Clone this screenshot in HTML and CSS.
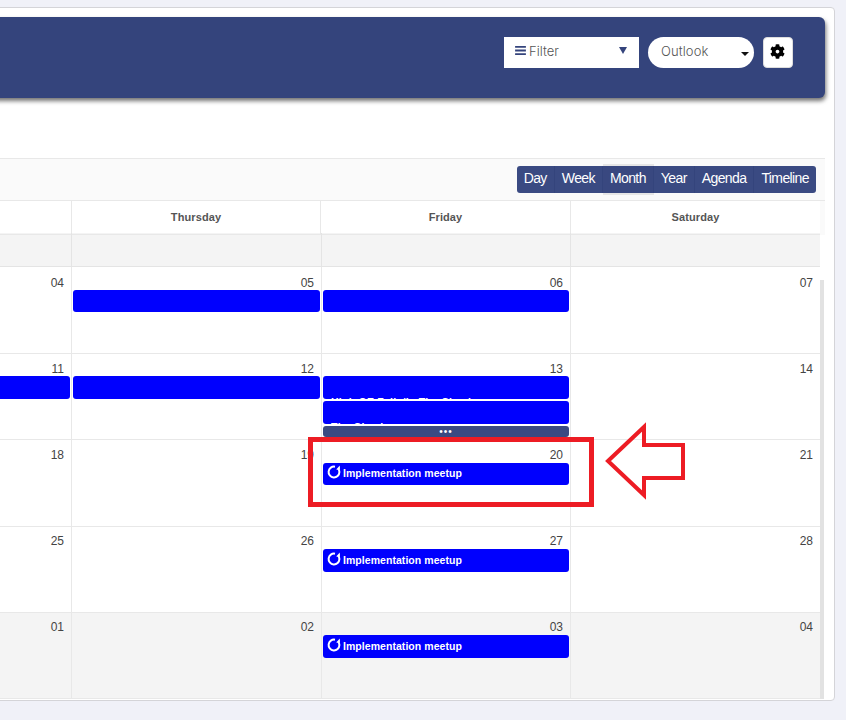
FILE: index.html
```html
<!DOCTYPE html>
<html lang="en">
<head>
<meta charset="utf-8">
<title>Calendar</title>
<link rel="stylesheet" href="styles.css">
</head>
<body>
<main class="card">
  <header class="banner">
    <div class="filter">
      <svg class="bars" viewBox="0 0 12 10"><path d="M0 0h12v2H0zM0 4h12v2H0zM0 8h12v2H0z"/></svg>
      <span class="filter-label">Filter</span>
      <span class="caret caret-blue"></span>
    </div>
    <div class="select"><span class="select-label">Outlook</span><span class="caret caret-black"></span></div>
    <button class="gear" aria-label="Settings">
      <svg viewBox="0 0 512 512"><path d="M487.4 315.7l-42.6-24.6c4.3-23.2 4.3-47 0-70.2l42.6-24.6c4.9-2.8 7.1-8.6 5.5-14-11.1-35.6-30-67.8-54.7-94.6-3.8-4.1-10-5.1-14.8-2.3L380.8 110c-17.9-15.4-38.5-27.3-60.8-35.1V25.8c0-5.6-3.9-10.5-9.4-11.7-36.7-8.2-74.3-7.8-109.2 0-5.5 1.2-9.4 6.1-9.4 11.7V75c-22.2 7.9-42.8 19.8-60.8 35.1L88.7 85.5c-4.9-2.8-11-1.9-14.8 2.3-24.7 26.7-43.6 58.9-54.7 94.6-1.7 5.4.6 11.2 5.5 14L67.3 221c-4.3 23.2-4.3 47 0 70.2l-42.6 24.6c-4.9 2.8-7.1 8.6-5.5 14 11.1 35.6 30 67.8 54.7 94.6 3.8 4.1 10 5.1 14.8 2.3l42.6-24.6c17.9 15.4 38.5 27.3 60.8 35.1v49.2c0 5.6 3.9 10.5 9.4 11.7 36.7 8.2 74.3 7.8 109.2 0 5.5-1.2 9.4-6.1 9.4-11.7v-49.2c22.2-7.9 42.8-19.8 60.8-35.1l42.6 24.6c4.9 2.8 11 1.9 14.8-2.3 24.7-26.7 43.6-58.9 54.7-94.6 1.5-5.5-.7-11.3-5.6-14.1zM256 320c-35.3 0-64-28.7-64-64s28.7-64 64-64 64 28.7 64 64-28.7 64-64 64z"/></svg>
    </button>
  </header>

  <section class="calendar">
    <div class="toolbar">
      <div class="views">
        <span class="view">Day</span><span class="view">Week</span><span class="view active">Month</span><span class="view">Year</span><span class="view">Agenda</span><span class="view">Timeline</span>
      </div>
    </div>
    <div class="grid head">
      <div class="hcell"></div><div class="hcell">Thursday</div><div class="hcell">Friday</div><div class="hcell">Saturday</div><div class="gutter"></div>
    </div>
    <div class="grid allday">
      <div class="acell"></div><div class="acell"></div><div class="acell"></div><div class="acell"></div>
    </div>
    <div class="weeks">
      <div class="grid week">
        <div class="day"><span class="num">04</span></div>
        <div class="day"><span class="num">05</span><div class="event"></div></div>
        <div class="day"><span class="num">06</span><div class="event"></div></div>
        <div class="day"><span class="num">07</span></div>
      </div>
      <div class="grid week">
        <div class="day"><span class="num">11</span><div class="event flush"></div></div>
        <div class="day"><span class="num">12</span><div class="event"></div></div>
        <div class="day"><span class="num">13</span>
          <div class="event clipped"><span class="clip-text">High OE Fails/In The Check</span></div>
          <div class="event clipped second"><span class="clip-text">The Check</span></div>
          <div class="more">•••</div>
        </div>
        <div class="day"><span class="num">14</span></div>
      </div>
      <div class="grid week">
        <div class="day"><span class="num">18</span></div>
        <div class="day"><span class="num">19</span></div>
        <div class="day"><span class="num">20</span><div class="event"><svg class="repeat" viewBox="0 0 14 14"><path d="M8 1.7A5.4 5.4 0 1 0 12.4 7.1C12.4 5.8 12 4.6 11 3.6"/><path class="tip" d="M9.2 4.6L13 4.8 12.8.6z"/></svg>Implementation meetup</div></div>
        <div class="day"><span class="num">21</span></div>
      </div>
      <div class="grid week">
        <div class="day"><span class="num">25</span></div>
        <div class="day"><span class="num">26</span></div>
        <div class="day"><span class="num">27</span><div class="event"><svg class="repeat" viewBox="0 0 14 14"><path d="M8 1.7A5.4 5.4 0 1 0 12.4 7.1C12.4 5.8 12 4.6 11 3.6"/><path class="tip" d="M9.2 4.6L13 4.8 12.8.6z"/></svg>Implementation meetup</div></div>
        <div class="day"><span class="num">28</span></div>
      </div>
      <div class="grid week muted">
        <div class="day"><span class="num">01</span></div>
        <div class="day"><span class="num">02</span></div>
        <div class="day"><span class="num">03</span><div class="event"><svg class="repeat" viewBox="0 0 14 14"><path d="M8 1.7A5.4 5.4 0 1 0 12.4 7.1C12.4 5.8 12 4.6 11 3.6"/><path class="tip" d="M9.2 4.6L13 4.8 12.8.6z"/></svg>Implementation meetup</div></div>
        <div class="day"><span class="num">04</span></div>
      </div>
      <div class="scrollbar"></div>
    </div>
  </section>
</main>
<svg class="annotation" viewBox="0 0 846 720">
  <rect x="310.5" y="439.5" width="281" height="65"/>
  <path d="M608 461L644 427V445H683V478H644V495Z"/>
</svg>
</body>
</html>
```
FILE: styles.css
```css
* { box-sizing: border-box; }
html, body { margin: 0; height: 720px; overflow: hidden; }
body {
  background: #f0f1f8;
  font-family: "Liberation Sans", Arial, sans-serif;
  position: relative;
  padding-top: 7px;
}
.card {
  margin-left: -10px;
  width: 845px;
  height: 694px;
  background: #fff;
  border: 1px solid #d4d4d8;
  border-radius: 4px;
  padding: 9px 9px 0 0;
}
.banner {
  height: 81px;
  background: #34447c;
  border-radius: 0 6px 6px 0;
  box-shadow: 1px 3px 4px rgba(0,0,0,.55);
  display: flex;
  align-items: flex-start;
  justify-content: flex-end;
  padding: 20px 32px 0 0;
  font-family: "Inter", sans-serif;
  font-weight: 300;
}
.filter {
  width: 135px;
  height: 31px;
  background: #fff;
  display: flex;
  align-items: center;
  padding: 0 12px 0 11px;
  color: #555;
  font-size: 13px;
}
.bars { width: 11px; height: 9px; fill: #34447c; margin-right: 3px; margin-top: -4px; }
.filter-label { flex: 1; margin-top: -3px; }
.caret { width: 0; height: 0; border-style: solid; border-color: transparent; }
.caret-blue { border-width: 7px 4px 0; border-top-color: #34447c; margin-top: -4px; }
.select {
  width: 106px;
  height: 31px;
  margin-left: 9px;
  background: #fff;
  border-radius: 16px;
  display: flex;
  align-items: center;
  justify-content: space-between;
  padding: 0 5px 0 13px;
  color: #555;
  font-size: 13px;
}
.select-label { margin-top: -3px; letter-spacing: .1px; }
.caret-black { border-width: 4px 4px 0; border-top-color: #111; margin-top: 3px; }
.gear {
  width: 30px;
  height: 31px;
  margin-left: 9px;
  padding: 0 2px 2px 0;
  background: #fff;
  border: 1px solid #ddd;
  border-radius: 4px;
  display: flex;
  align-items: center;
  justify-content: center;
}
.gear svg { width: 15px; height: 15px; fill: #000; }
.calendar { margin-top: 60px; }
.toolbar {
  height: 43px;
  background: #fafafa;
  border-top: 1px solid #e8e8e8;
  border-bottom: 1px solid #e8e8e8;
  display: flex;
  justify-content: flex-end;
  padding: 7px 9px 0 0;
}
.views {
  display: flex;
  height: 27px;
  background: #3a4a82;
  border-radius: 3px;
}
.view {
  color: #fff;
  font-size: 14px;
  letter-spacing: -.6px;
  line-height: 25px;
  padding: 0 7px;
  border-right: 1px solid #34447c;
}
.view:last-child { border-right: 0; }
.view.active { box-shadow: 0 -2px 0 rgba(0,0,0,.08), 0 2px 0 rgba(0,0,0,.08); background: #394880; }
.grid {
  display: grid;
  grid-template-columns: 81px 250px 249px 249px;
  width: 829px;
}
.head {
  height: 32px;
  width: 834px;
  grid-template-columns: 81px 249px 250px 249px 5px;
}
.hcell {
  border-right: 1px solid #e8e8e8;
  border-bottom: 1px solid #e8e8e8;
  font-size: 11px;
  font-weight: 700;
  color: #555;
  text-align: center;
  letter-spacing: .1px;
  line-height: 33px;
}
.hcell:nth-child(4) { border-right: 0; }
.gutter { background: #fafafa; }
.allday { height: 34px; background: #f4f4f4; border-bottom: 1px solid #e4e4e4; }
.acell { border-right: 1px solid #e4e4e4; }
.acell:last-child { border-right: 0; }
.weeks { position: relative; }
.week { height: 86px; border-bottom: 1px solid #e8e8e8; }
.week:nth-child(odd) { height: 87px; }
.week.muted { height: 86px; background: #f4f4f4; }
.day {
  border-right: 1px solid #e8e8e8;
  padding: 10px 1px 0;
  display: flex;
  flex-direction: column;
  position: relative;
  overflow: hidden;
}
.day:last-child { border-right: 0; }
.week:nth-child(2) .day, .week:nth-child(3) .day { padding-top: 9px; }
.week:nth-child(4) .day, .week:nth-child(5) .day { padding-top: 8px; }
.num {
  font-size: 12px;
  line-height: 13px;
  color: #444;
  text-align: right;
  padding-right: 6px;
}
.event {
  height: 22px;
  flex: none;
  background: #0000fe;
  border-radius: 3px;
  color: #fff;
  font-size: 10.5px;
  font-weight: 700;
  letter-spacing: .05px;
  line-height: 22px;
  display: flex;
  align-items: center;
  padding: 0 0 1px 4px;
  overflow: hidden;
}
.week:nth-child(2) .event, .week:nth-child(4) .event, .week:nth-child(5) .event { height: 23px; }
.week:nth-child(n+3) .event { margin-top: 1px; }
.week:nth-child(3) .event { padding-bottom: 2px; }
.event.flush { margin-left: -6px; border-radius: 0 3px 3px 0; }
.clipped { display: block; padding-left: 8px; }
.week .second { margin-top: 2px; }
.clip-text { display: block; line-height: 13px; padding-top: 20px; white-space: nowrap; letter-spacing: .25px; }
.more {
  flex: none;
  height: 11px;
  margin-top: 2px;
  background: #3a4a82;
  border-radius: 3px;
  color: #fff;
  font-size: 10px;
  letter-spacing: 1px;
  line-height: 11px;
  text-align: center;
}
.repeat { width: 14px; height: 14px; margin: 0 2px 3px 0; flex: none; fill: none; stroke: #fff; stroke-width: 2; overflow: visible; }
.repeat .tip { fill: #fff; stroke: none; }
.scrollbar {
  position: absolute;
  left: 829px;
  top: 13px;
  bottom: 0;
  width: 4px;
  background: #e2e2e2;
}
.annotation {
  position: absolute;
  inset: 0;
  width: 846px;
  height: 720px;
  fill: none;
  stroke: #ed1c24;
  stroke-width: 4;
}
.annotation rect { stroke-width: 5; }
```
